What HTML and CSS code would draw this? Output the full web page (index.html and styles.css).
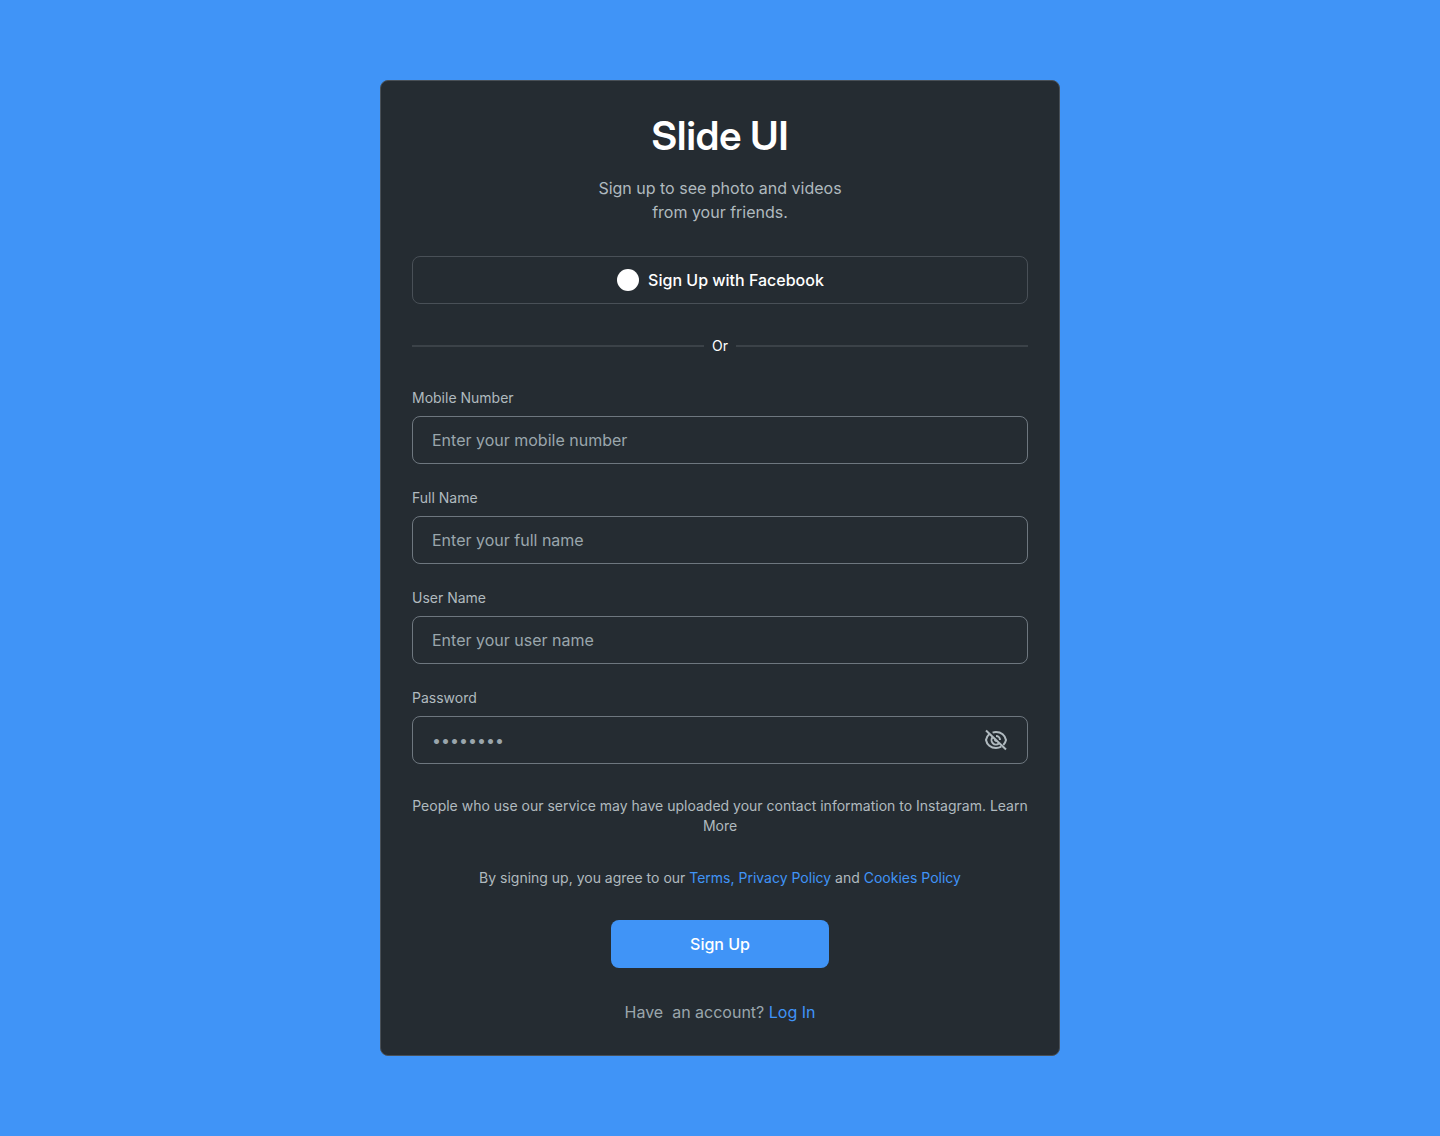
FILE: index.html
```html
<!DOCTYPE html>
<html lang="en">
<head>
  <meta charset="utf-8">
  <meta name="viewport" content="width=device-width, initial-scale=1">
  <title>Slide UI – Sign Up</title>
  <link rel="stylesheet" href="styles.css">
</head>
<body>
  <main class="page">
    <form class="card">
      <header class="intro">
        <h1 class="title">Slide UI</h1>
        <p class="subtitle">Sign up to see photo and videos<br>from your friends.</p>
      </header>

      <button class="button button-outline" type="button">
        <svg class="brand-icon" viewBox="0 0 24 24" aria-hidden="true"><circle cx="12" cy="12" r="11" fill="currentColor"/></svg>
        Sign Up with Facebook
      </button>

      <div class="divider">Or</div>

      <div class="fields">
        <div class="field">
          <label class="label" for="mobile">Mobile Number</label>
          <div class="control"><input class="input" id="mobile" type="tel" placeholder="Enter your mobile number"></div>
        </div>
        <div class="field">
          <label class="label" for="fullname">Full Name</label>
          <div class="control"><input class="input" id="fullname" type="text" placeholder="Enter your full name"></div>
        </div>
        <div class="field">
          <label class="label" for="username">User Name</label>
          <div class="control"><input class="input" id="username" type="text" placeholder="Enter your user name"></div>
        </div>
        <div class="field">
          <label class="label" for="password">Password</label>
          <div class="control">
            <input class="input" id="password" type="password" placeholder="••••••••">
            <button class="toggle" type="button" aria-label="Show password">
              <svg class="toggle-icon" viewBox="0 0 24 24" fill="none" stroke="currentColor" stroke-width="2" aria-hidden="true">
                <path d="M2 2.500 22 21.500"/>
                <path d="M8.600 4.600C9.700 4.200 10.800 4 12 4c5.200 0 9.200 3.400 10 8-.4 1.900-1.300 3.600-2.700 5"/>
                <path d="M5.400 6C3.600 7.500 2.400 9.600 2 12c.8 4.600 4.800 8 10 8 1.900 0 3.700-.5 5.200-1.300"/>
                <path d="M8.800 9A4.300 4.300 0 0 0 15 15.200"/>
                <path d="M12 8a4 4 0 0 1 4 4"/>
                <path d="M11 11.200a1.500 1.500 0 0 0 1.800 1.800"/>
              </svg>
            </button>
          </div>
        </div>
      </div>

      <p class="note">People who use our service may have uploaded your contact information to Instagram. Learn More</p>
      <p class="note">By signing up, you agree to our <a class="link" href="#terms">Terms,</a> <a class="link" href="#privacy">Privacy Policy</a> and <a class="link" href="#cookies">Cookies Policy</a></p>

      <button class="button button-primary" type="submit">Sign Up</button>

      <p class="account">Have&nbsp; an account? <a class="link" href="#login">Log In</a></p>
    </form>
  </main>
</body>
</html>
```
FILE: styles.css
```css
*,
*::before,
*::after {
  box-sizing: border-box;
}

body {
  margin: 0;
  background: #4094f7;
  color: #fff;
  font-family: Inter, "Liberation Sans", sans-serif;
  font-size: 16px;
  line-height: 24px;
}

h1,
p {
  margin: 0;
}

.page {
  display: flex;
  justify-content: center;
  padding: 80px 16px;
}

.card {
  display: flex;
  flex-direction: column;
  gap: 32px;
  width: 100%;
  max-width: 680px;
  padding: 31px;
  border: 1px solid #495057;
  border-radius: 8px;
  background: #252c32;
}

.intro {
  display: flex;
  flex-direction: column;
  gap: 16px;
  text-align: center;
}

.title {
  font-family: "Inter Display", Inter, "Liberation Sans", sans-serif;
  font-size: 40px;
  font-weight: 600;
  font-variation-settings: "opsz" 32;
  line-height: 48px;
}

.subtitle {
  color: #b0babf;
}

.button {
  display: flex;
  align-items: center;
  justify-content: center;
  gap: 8px;
  height: 48px;
  border-radius: 8px;
  color: #fff;
  font: inherit;
  font-weight: 500;
  cursor: pointer;
}

.button-outline {
  border: 1px solid #495057;
  background: transparent;
}

.button-primary {
  align-self: center;
  width: 218px;
  border: 0;
  background: #4094f7;
}

.brand-icon {
  width: 24px;
  height: 24px;
}

.divider {
  display: flex;
  align-items: center;
  gap: 8px;
  font-size: 14px;
  line-height: 20px;
}

.divider::before,
.divider::after {
  content: "";
  flex: 1;
  height: 2px;
  background: #3b4248;
}

.fields {
  display: flex;
  flex-direction: column;
  gap: 24px;
}

.field {
  display: flex;
  flex-direction: column;
  gap: 8px;
}

.label {
  color: #b0babf;
  font-size: 14px;
  line-height: 20px;
}

.control {
  display: flex;
  align-items: center;
  height: 48px;
  padding: 0 19px;
  border: 1px solid #6e777f;
  border-radius: 8px;
}

.input {
  flex: 1;
  min-width: 0;
  padding: 0;
  border: 0;
  outline: 0;
  background: transparent;
  color: #fff;
  font: inherit;
}

.input::placeholder {
  color: #9aa6ac;
  opacity: 1;
}

.toggle {
  display: flex;
  padding: 0;
  border: 0;
  background: transparent;
  color: #b0babf;
  cursor: pointer;
}

.toggle-icon {
  width: 24px;
  height: 24px;
}

.note {
  color: #b0babf;
  font-size: 14px;
  line-height: 20px;
  text-align: center;
}

.account {
  color: #9aa6ac;
  text-align: center;
}

.link {
  color: #4094f7;
  text-decoration: none;
}
```
